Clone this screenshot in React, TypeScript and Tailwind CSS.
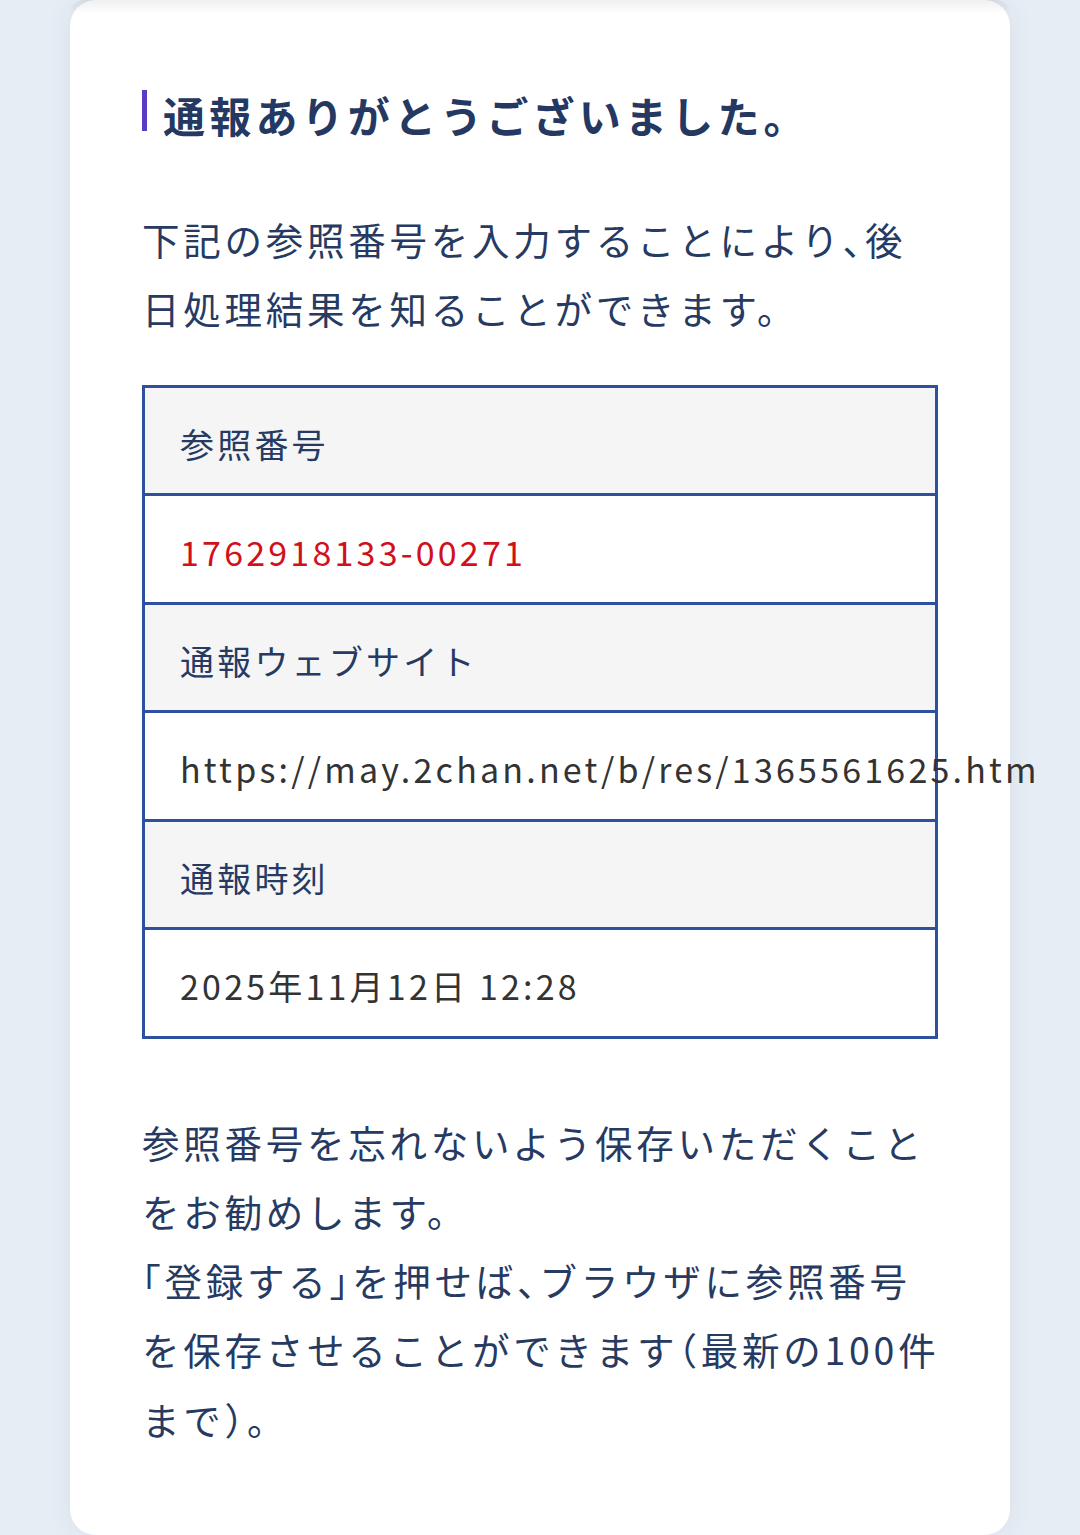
const rows = [
  { label: "参照番号", value: "1762918133-00271", red: true },
  { label: "通報ウェブサイト", value: "https://may.2chan.net/b/res/1365561625.htm" },
  { label: "通報時刻", value: "2025年11月12日 12:28" },
];

// punctuation is set half-width in the original
function Jp({ text }: { text: string }) {
  return (
    <>
      {text.split(/([、「」（）])/).map((part, i) =>
        /^[、「」（）]$/.test(part) ? (
          <span key={i} className="[font-feature-settings:'halt']">
            {part}
          </span>
        ) : (
          part
        )
      )}
    </>
  );
}

export default function App() {
  return (
    <div
      className="min-h-[1535px] bg-[#e7edf5] px-[70px] text-[#263a62]"
      style={{ fontFamily: '"Noto Sans CJK JP", "Noto Sans", sans-serif' }}
    >
      <div className="relative rounded-[26px] bg-white px-[72px] pt-[90px] pb-[82px] shadow-[0_0_28px_rgba(20,50,90,0.07)]">
        {/* shadow from the header above */}
        <div className="pointer-events-none absolute inset-x-0 top-0 h-[14px] rounded-t-[26px] bg-gradient-to-b from-black/[0.06] to-transparent" />

        {/* Heading */}
        <div className="flex items-start">
          <span className="mr-[16px] h-[41px] w-[5px] shrink-0 bg-[#5b3bc4]" />
          <h1 className="text-[42px] leading-[49px] font-bold tracking-[4.2px] text-[#243862]">
            通報ありがとうございました。
          </h1>
        </div>

        <p className="mt-[65px] -mr-[6px] text-[37.5px] leading-[69.3px] tracking-[3.75px]">
          <Jp text="下記の参照番号を入力することにより、後日処理結果を知ることができます。" />
        </p>

        {/* Result table */}
        <div className="mt-[42px] border-[3px] border-[#2f4f9f]">
          {rows.map((row, i) => (
            <div key={row.label}>
              <div className={`border-[#2f4f9f] bg-[#f5f5f6] pt-[30px] pb-[24.5px] pl-[35px] text-[34px] leading-[51px] tracking-[3.2px] text-[#263a62] ${i > 0 ? "border-t-[3px]" : ""}`}>
                {row.label}
              </div>
              <div
                className={`whitespace-nowrap border-t-[3px] border-[#2f4f9f] bg-white pt-[30px] pb-[24.5px] pl-[35px] text-[34px] leading-[51px] tracking-[3.2px] ${row.red ? "text-[#d0111c]" : "text-[#333333]"}`}
              >
                {row.value}
              </div>
            </div>
          ))}
        </div>

        <p className="mt-[68px] -mr-[6px] text-[37.5px] leading-[69.3px] tracking-[3.75px]">
          <Jp text="参照番号を忘れないよう保存いただくことをお勧めします。" />
          <br />
          <Jp text="「登録する」を押せば、ブラウザに参照番号を保存させることができます（最新の100件まで）。" />
        </p>
      </div>
    </div>
  );
}
